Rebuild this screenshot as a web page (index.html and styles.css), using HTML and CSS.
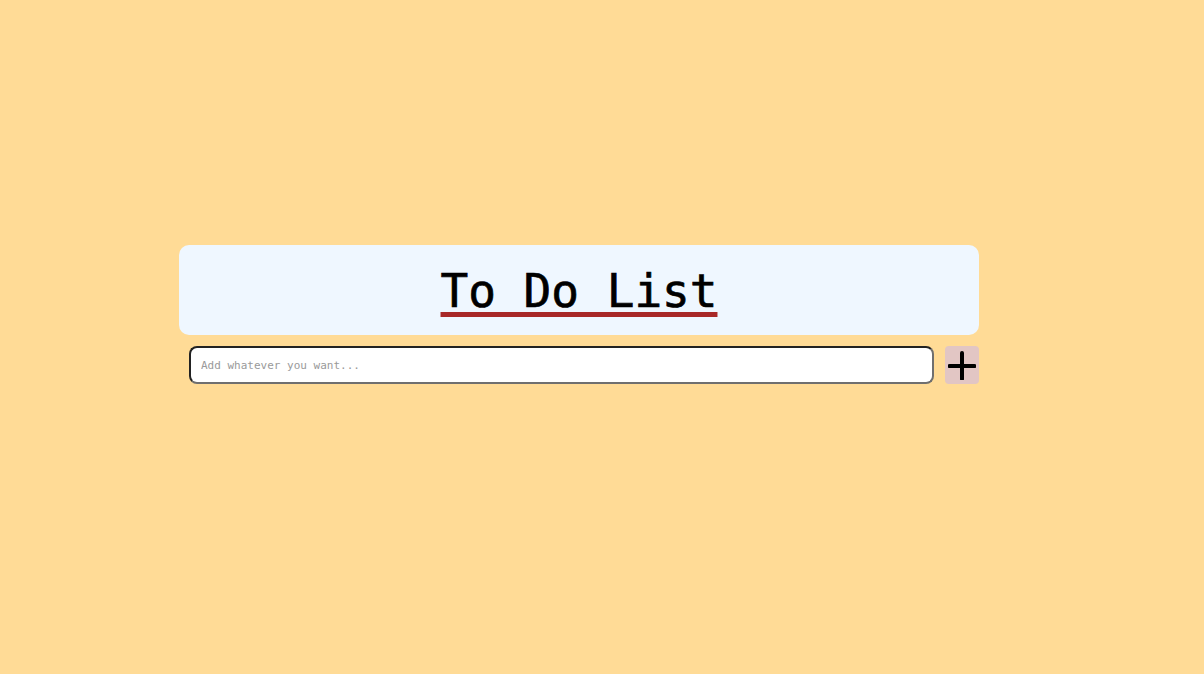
FILE: index.html
```html
<!DOCTYPE html>
<html lang="en">
<head>
<meta charset="utf-8">
<title>To Do List</title>
<link rel="stylesheet" href="styles.css">
</head>
<body>
<main class="app">
  <header class="card">
    <h1 class="title">To Do List</h1>
  </header>
  <form class="entry">
    <input class="entry-input" type="text" placeholder="Add whatever you want...">
    <button class="add-btn" type="button" aria-label="Add">
      <svg width="28" height="30" viewBox="0 0 28 30"><path d="M14 3v26M1.5 16h25" stroke="#000" stroke-width="4" stroke-linecap="round" fill="none"/></svg>
    </button>
  </form>
</main>
</body>
</html>
```
FILE: styles.css
```css
html, body {
  margin: 0;
  padding: 0;
  background: #ffdb96;
  font-family: "DejaVu Sans Mono", "Liberation Mono", monospace;
}
.app {
  width: 800px;
  margin-left: 179px;
  padding-top: 245px;
}
.card {
  height: 90px;
  background: #eff7ff;
  border-radius: 10px;
  display: flex;
  justify-content: center;
  align-items: flex-start;
}
.title {
  margin: 19px 0 0;
  font-size: 46px;
  font-weight: normal;
  line-height: 54px;
  color: #000;
  -webkit-text-stroke: 0.7px #000;
  text-decoration: underline;
  text-decoration-color: #a82828;
  text-decoration-thickness: 5px;
  text-underline-offset: 5px;
}
.entry {
  display: flex;
  gap: 11px;
  margin-top: 11px;
  padding-left: 10px;
}
.entry-input {
  flex: 1;
  height: 38px;
  box-sizing: border-box;
  border: 2px solid #767676;
  border-top-color: #222;
  border-left-color: #222;
  border-right-color: #6f6f6f;
  border-bottom-color: #6f6f6f;
  border-radius: 8px;
  padding: 0 10px;
  font-family: "DejaVu Sans Mono", monospace;
  font-size: 11px;
  background: #fff;
  outline: none;
}
.entry-input::placeholder {
  color: #9a9a9a;
}
.add-btn {
  width: 34px;
  height: 38px;
  padding: 0;
  border: none;
  border-radius: 4px;
  background: #e2c6c4;
  display: flex;
  align-items: center;
  justify-content: center;
}
```
